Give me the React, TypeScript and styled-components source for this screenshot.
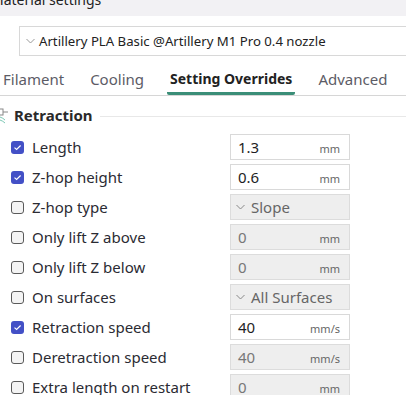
import styled, { createGlobalStyle } from 'styled-components';

const GlobalStyle = createGlobalStyle`
  html, body {
    margin: 0;
    padding: 0;
    background: #fff;
    overflow: hidden;
  }
  body {
    font-family: "Noto Sans", "Open Sans", sans-serif;
    color: #2b2b33;
  }
`;

const Page = styled.div`
  width: 406px;
  height: 395px;
  overflow: hidden;
  background: #fff;
`;

const TitleBar = styled.div`
  height: 16px;
  background: #f2f1f4;
  overflow: hidden;
  display: flex;
  align-items: flex-start;
`;

const TitleText = styled.span`
  font-size: 14px;
  line-height: 14px;
  margin-top: -7px;
  margin-left: -9px;
  color: #222;
  white-space: nowrap;
`;

const PresetWrap = styled.div`
  padding: 10px 0 0 19px;
`;

const PresetBox = styled.div`
  width: 420px;
  height: 28px;
  border: 1px solid #d8d8d8;
  display: flex;
  align-items: center;
  gap: 4px;
  padding-left: 6px;
  font-size: 13.2px;
  color: #222;
  white-space: nowrap;
`;

const TabBar = styled.div`
  margin-top: 12px;
  display: flex;
  gap: 20px;
  border-bottom: 1px solid #d6d6d6;
  white-space: nowrap;
`;

const Tab = styled.div<{ $active?: boolean }>`
  padding: 1px 3px 3px;
  font-size: ${(p) => (p.$active ? '14px' : '15px')};
  line-height: 20px;
  font-weight: ${(p) => (p.$active ? 700 : 400)};
  color: ${(p) => (p.$active ? '#222' : '#5c5c66')};
  border-bottom: 3px solid ${(p) => (p.$active ? '#3b8e78' : 'transparent')};
  border-radius: 2px;
`;

const SectionHead = styled.div`
  margin-top: 8px;
  height: 22px;
  display: flex;
  align-items: center;
`;

const SectionTitle = styled.span`
  font-size: 15px;
  font-weight: 700;
  color: #2a2a2a;
  margin-left: 6px;
`;

const SectionRule = styled.div`
  flex: 1;
  height: 1px;
  background: #e8e8e8;
  margin: 3px 0 0 7px;
`;

const List = styled.div`
  margin-top: 6px;
`;

const Row = styled.div`
  height: 30px;
  display: grid;
  grid-template-columns: 219px 120px;
  align-items: center;
  padding-left: 11px;
`;

const LabelCell = styled.div`
  display: flex;
  align-items: center;
  gap: 8px;
  font-size: 15px;
  color: #2b2b33;
  white-space: nowrap;
`;

const Box = styled.div<{ $checked: boolean }>`
  width: 13px;
  height: 13px;
  box-sizing: border-box;
  border-radius: 3px;
  display: flex;
  align-items: center;
  justify-content: center;
  background: ${(p) => (p.$checked ? '#4350c6' : '#f4f4f4')};
  border: ${(p) => (p.$checked ? 'none' : '1px solid #5a5a5a')};
`;

const Field = styled.div<{ $disabled: boolean }>`
  height: 26px;
  box-sizing: border-box;
  border: 1px solid ${(p) => (p.$disabled ? '#dcdcdc' : '#d9d9d9')};
  background: ${(p) => (p.$disabled ? '#eeeeee' : '#fff')};
  display: flex;
  align-items: baseline;
  justify-content: space-between;
  padding: 0 9px 0 7px;
  line-height: 24px;
`;

const Value = styled.span<{ $disabled: boolean }>`
  font-size: 15px;
  color: ${(p) => (p.$disabled ? '#777' : '#1e1e24')};
`;

const Unit = styled.span`
  font-size: 11px;
  color: #666;
`;

const Select = styled.div`
  height: 26px;
  box-sizing: border-box;
  border: 1px solid #dcdcdc;
  background: #eeeeee;
  display: flex;
  align-items: center;
  gap: 6px;
  padding-left: 5px;
  font-size: 15px;
  color: #666;
`;

const Chevron = ({ color = '#888' }: { color?: string }) => (
  <svg width="9" height="6" viewBox="0 0 9 6">
    <polyline points="0.5,1 4.5,5 8.5,1" fill="none" stroke={color} strokeWidth="1" />
  </svg>
);

const Check = () => (
  <svg width="9" height="7" viewBox="0 0 9 7">
    <polyline points="1.5,3.6 3.6,5.4 7.6,1.5" fill="none" stroke="#fff" strokeWidth="1.2" />
  </svg>
);

const SectionIcon = () => (
  <svg width="8" height="20" viewBox="0 0 8 20">
    <rect x="-3" y="4" width="6" height="6" fill="none" stroke="#888" strokeWidth="1" />
    <line x1="3" y1="7" x2="8" y2="7" stroke="#888" strokeWidth="1" />
    <path d="M0 12 Q3 13 5 15 M0 15 Q3 16 5 18" fill="none" stroke="#7cc7b4" strokeWidth="1" />
  </svg>
);

type Item = {
  label: string;
  checked: boolean;
  kind: 'num' | 'select';
  value: string;
  unit?: string;
};

const items: Item[] = [
  { label: 'Length', checked: true, kind: 'num', value: '1.3', unit: 'mm' },
  { label: 'Z-hop height', checked: true, kind: 'num', value: '0.6', unit: 'mm' },
  { label: 'Z-hop type', checked: false, kind: 'select', value: 'Slope' },
  { label: 'Only lift Z above', checked: false, kind: 'num', value: '0', unit: 'mm' },
  { label: 'Only lift Z below', checked: false, kind: 'num', value: '0', unit: 'mm' },
  { label: 'On surfaces', checked: false, kind: 'select', value: 'All Surfaces' },
  { label: 'Retraction speed', checked: true, kind: 'num', value: '40', unit: 'mm/s' },
  { label: 'Deretraction speed', checked: false, kind: 'num', value: '40', unit: 'mm/s' },
  { label: 'Extra length on restart', checked: false, kind: 'num', value: '0', unit: 'mm' },
];

const App = () => {
  return (
    <Page>
      <GlobalStyle />
      <TitleBar>
        <TitleText>Material settings</TitleText>
      </TitleBar>
      <PresetWrap>
        <PresetBox>
          <Chevron color="#999" />
          Artillery PLA Basic @Artillery M1 Pro 0.4 nozzle
        </PresetBox>
      </PresetWrap>
      <TabBar>
        <Tab>Filament</Tab>
        <Tab>Cooling</Tab>
        <Tab $active>Setting Overrides</Tab>
        <Tab>Advanced</Tab>
      </TabBar>
      <SectionHead>
        <SectionIcon />
        <SectionTitle>Retraction</SectionTitle>
        <SectionRule />
      </SectionHead>
      <List>
        {items.map((it) => (
          <Row key={it.label}>
            <LabelCell>
              <Box $checked={it.checked}>{it.checked && <Check />}</Box>
              {it.label}
            </LabelCell>
            {it.kind === 'select' ? (
              <Select>
                <Chevron />
                {it.value}
              </Select>
            ) : (
              <Field $disabled={!it.checked}>
                <Value $disabled={!it.checked}>{it.value}</Value>
                <Unit>{it.unit}</Unit>
              </Field>
            )}
          </Row>
        ))}
      </List>
    </Page>
  );
};

export default App;
